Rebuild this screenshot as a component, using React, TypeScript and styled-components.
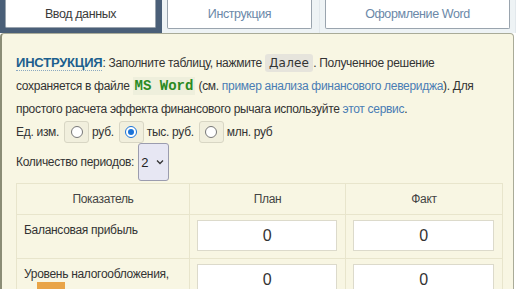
import React from "react";
import styled, { createGlobalStyle } from "styled-components";

const GlobalStyle = createGlobalStyle`
  body {
    margin: 0;
    background: #ffffff;
    font-family: "Liberation Sans", Arial, sans-serif;
  }
`;

const Page = styled.div`
  width: 516px;
  height: 289px;
  overflow: hidden;
`;

const TabBar = styled.div`
  display: flex;
  height: 33px;
  background: #eef3f5;
`;

const TabSlot = styled.div<{ $active?: boolean; $width: number; $right?: number }>`
  width: ${(p) => p.$width}px;
  flex: none;
  box-sizing: border-box;
  padding: 0 ${(p) => p.$right ?? 5}px ${(p) => (p.$active ? 5 : 4)}px 5px;
  background: ${(p) => (p.$active ? "#4a5f78" : "transparent")};
  border-right: ${(p) => (p.$active ? "none" : "1px solid #e2e8ec")};
  display: flex;
`;

const TabButton = styled.div<{ $active?: boolean }>`
  flex: 1;
  display: flex;
  align-items: center;
  justify-content: center;
  background: #ffffff;
  border: 1px solid #9aa4ae;
  border-top: none;
  border-radius: 0 0 2px 2px;
  font-size: 12.5px;
  letter-spacing: -0.4px;
  color: ${(p) => (p.$active ? "#3a3a3a" : "#6b88a8")};
`;

const Panel = styled.div`
  margin-right: 2px;
  height: 300px;
  box-sizing: border-box;
  border: 1px solid #a9ab98;
  border-left: 2px solid #8b8d76;
  border-radius: 4px;
  background: #f8f6e3;
  padding: 17px 14px 0 14px;
  font-size: 12px;
  letter-spacing: -0.3px;
  color: #333;
`;

const Intro = styled.p`
  margin: 0;
  line-height: 23px;
`;

const Heading = styled.span`
  color: #1c5f8e;
  font-weight: bold;
  font-size: 13px;
  letter-spacing: -0.2px;
  border-bottom: 1px dotted #8aa8c0;
`;

const Key = styled.span`
  display: inline-block;
  background: #e6e4dc;
  border-radius: 3px;
  padding: 0 4px;
  line-height: 18px;
  font-family: "DejaVu Sans", sans-serif;
  font-size: 12px;
  letter-spacing: 0.2px;
  color: #333;
`;

const Code = styled.span`
  display: inline-block;
  background: #eeefdc;
  padding: 0 2px;
  line-height: 18px;
  font-family: "Liberation Mono", monospace;
  font-weight: bold;
  font-size: 14px;
  letter-spacing: 0;
  color: #2a8a22;
`;

const Link = styled.a`
  color: #4a7db4;
  text-decoration: none;
`;

const Row = styled.div`
  display: flex;
  align-items: center;
  height: 22px;
`;

const RadioBox = styled.span`
  width: 25px;
  height: 22px;
  box-sizing: border-box;
  margin: 0 3px 0 5px;
  border: 1px solid #d8d6c4;
  border-radius: 3px;
  background: #f1efdd;
  display: flex;
  align-items: center;
  justify-content: center;
`;

const RadioDot = styled.span<{ $checked?: boolean }>`
  width: 12px;
  height: 12px;
  box-sizing: border-box;
  border-radius: 50%;
  background: #fff;
  border: ${(p) => (p.$checked ? "1px solid #1a73d8" : "1px solid #777")};
  display: flex;
  align-items: center;
  justify-content: center;

  &::after {
    content: "";
    width: 6px;
    height: 6px;
    border-radius: 50%;
    background: ${(p) => (p.$checked ? "#1a73d8" : "transparent")};
  }
`;

const PeriodRow = styled(Row)`
  height: 38px;
`;

const Select = styled.div`
  margin-left: 4px;
  width: 31px;
  height: 38px;
  box-sizing: border-box;
  border: 1px solid #9b9cae;
  border-radius: 3px;
  background: #e7e7f3;
  display: flex;
  align-items: center;
  justify-content: space-between;
  padding: 0 4px 0 2px;
  font-size: 13px;
  color: #222;
`;

const Table = styled.table`
  margin-top: 2px;
  width: 486px;
  border-collapse: collapse;
  table-layout: fixed;
  border: 1px solid #e8e5cc;
`;

const Th = styled.th`
  height: 30px;
  padding: 0;
  font-weight: normal;
  font-size: 12px;
  color: #444;
  border: 1px solid #e8e5cc;
`;

const Td = styled.td<{ $label?: boolean }>`
  vertical-align: top;
  padding: ${(p) => (p.$label ? "7px 7px 0 7px" : "5px 8px 7px 7px")};
  font-size: 12px;
  line-height: 16px;
  color: #333;
  border: 1px solid #e8e5cc;
`;

const NumInput = styled.div`
  height: 31px;
  box-sizing: border-box;
  background: #ffffff;
  border: 1px solid #dcdacb;
  display: flex;
  align-items: center;
  justify-content: center;
  font-size: 16px;
  color: #333;
`;

const HelpButton = styled.span`
  display: block;
  margin: 0 0 0 13px;
  width: 28px;
  height: 20px;
  background: #e9a447;
`;

const Chevron = () => (
  <svg width="8" height="6" viewBox="0 0 8 6">
    <path d="M1 1.5 L4 4.5 L7 1.5" stroke="#333" strokeWidth="1.3" fill="none" />
  </svg>
);

const App: React.FC = () => {
  return (
    <Page>
      <GlobalStyle />
      <TabBar>
        <TabSlot $active $width={162} $right={6}>
          <TabButton $active>Ввод данных</TabButton>
        </TabSlot>
        <TabSlot $width={158} $right={7}>
          <TabButton>Инструкция</TabButton>
        </TabSlot>
        <TabSlot $width={196}>
          <TabButton>Оформление Word</TabButton>
        </TabSlot>
      </TabBar>

      <Panel>
        <Intro>
          <Heading>ИНСТРУКЦИЯ</Heading>: Заполните таблицу, нажмите <Key>Далее</Key>. Полученное решение
          сохраняется в файле <Code>MS Word</Code> (см. <Link>пример анализа финансового левериджа</Link>). Для
          простого расчета эффекта финансового рычага используйте <Link>этот сервис</Link>.
        </Intro>

        <Row>
          Ед. изм.
          <RadioBox>
            <RadioDot />
          </RadioBox>
          руб.
          <RadioBox>
            <RadioDot $checked />
          </RadioBox>
          тыс. руб.
          <RadioBox>
            <RadioDot />
          </RadioBox>
          млн. руб
        </Row>

        <PeriodRow>
          Количество периодов:
          <Select>
            2
            <Chevron />
          </Select>
        </PeriodRow>

        <Table>
          <colgroup>
            <col style={{ width: 173 }} />
            <col style={{ width: 156 }} />
            <col style={{ width: 157 }} />
          </colgroup>
          <thead>
            <tr>
              <Th>Показатель</Th>
              <Th>План</Th>
              <Th>Факт</Th>
            </tr>
          </thead>
          <tbody>
            <tr>
              <Td $label style={{ height: 36 }}>Балансовая прибыль</Td>
              <Td>
                <NumInput>0</NumInput>
              </Td>
              <Td>
                <NumInput>0</NumInput>
              </Td>
            </tr>
            <tr>
              <Td $label>
                Уровень налогообложения,
                <HelpButton />
              </Td>
              <Td>
                <NumInput>0</NumInput>
              </Td>
              <Td>
                <NumInput>0</NumInput>
              </Td>
            </tr>
          </tbody>
        </Table>
      </Panel>
    </Page>
  );
};

export default App;
